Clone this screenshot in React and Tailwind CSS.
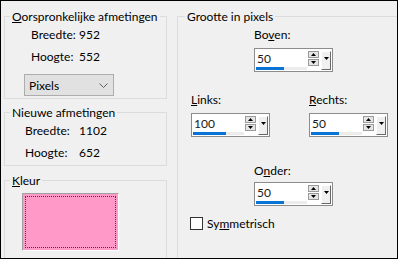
import React from "react";

const font = { fontFamily: 'Lato, "Noto Sans", sans-serif' };

function Spinner({ value, bar }) {
  return (
    <div className="w-[79px] h-[24px] border border-[#8c8c8c] bg-white flex">
      <div className="w-[52px] pl-[2px] flex flex-col">
        <div className="mt-[2px] h-[15px] leading-[15px] text-[12px] text-[#1a1a1a]">{value}</div>
        <div className="mt-[1px] -ml-[1px] h-[3px] flex">
          <div className="h-full bg-[#0a74d6]" style={{ width: bar }} />
          <div className="h-full flex-1 bg-[#ececec]" />
        </div>
      </div>
      <div className="ml-[1px] mt-[2px] w-[11px] flex flex-col gap-[1px]">
        <div className="h-[7px] border border-[#9a9a9a] bg-[#e6e6e6] flex items-center justify-center">
          <svg width="5" height="3" viewBox="0 0 5 3"><polygon points="2.5,0 5,3 0,3" fill="#000" /></svg>
        </div>
        <div className="h-[7px] border border-[#9a9a9a] bg-[#e6e6e6] flex items-center justify-center">
          <svg width="5" height="3" viewBox="0 0 5 3"><polygon points="0,0 5,0 2.5,3" fill="#000" /></svg>
        </div>
      </div>
      <div className="ml-[2px] mt-[2px] w-[10px] h-[19px] bg-[#f0f0f0] border-t border-l border-t-white border-l-white border-r border-b border-r-[#696969] border-b-[#696969] flex justify-center pt-[5px]">
        <svg width="5" height="3" viewBox="0 0 5 3"><polygon points="0,0 5,0 2.5,3" fill="#000" /></svg>
      </div>
    </div>
  );
}

function Field({ label, value, labelW }) {
  return (
    <div className="flex h-[15px] leading-[15px] whitespace-nowrap">
      <span className="shrink-0" style={{ width: labelW }}>{label}</span>
      <span>{value}</span>
    </div>
  );
}

export default function App() {
  return (
    <div
      className="w-[398px] h-[259px] border border-black bg-[#f0f0f0] overflow-hidden flex text-[12px] text-black"
      style={font}
    >
      {/* left column */}
      <div className="ml-[3px] w-[163px] flex flex-col shrink-0">
        <fieldset className="mt-[8px] h-[90px] shrink-0 border border-[#dcdcdc]">
          <legend className="ml-[5px] px-[2px] leading-[15px] whitespace-nowrap">
            <span className="underline">O</span>orspronkelijke afmetingen
          </legend>
          <div className="pl-[26px] mt-[3px]">
            <Field label="Breedte:" value="952" labelW={48} />
          </div>
          <div className="pl-[26px] mt-[7px]">
            <Field label="Hoogte:" value="552" labelW={48} />
          </div>
          <div className="ml-[19px] mt-[10px] w-[90px] h-[22px] border border-[#adadad] bg-[#e1e1e1] flex items-center justify-between pl-[4px] pr-[5px]">
            <span className="leading-[15px]">Pixels</span>
            <svg width="9" height="5" viewBox="0 0 9 5">
              <polyline points="0.5,0.5 4.5,4.5 8.5,0.5" fill="none" stroke="#606060" strokeWidth="1" />
            </svg>
          </div>
        </fieldset>

        <fieldset className="mt-[6px] h-[61px] shrink-0 border border-[#dcdcdc]">
          <legend className="ml-[5px] px-[2px] leading-[15px] whitespace-nowrap">Nieuwe afmetingen</legend>
          <div className="pl-[20px] mt-[3px]">
            <Field label="Breedte:" value="1102" labelW={54} />
          </div>
          <div className="pl-[20px] mt-[7px]">
            <Field label="Hoogte:" value="652" labelW={54} />
          </div>
        </fieldset>

        <fieldset className="mt-[7px] h-[100px] shrink-0 border border-[#dcdcdc]">
          <legend className="ml-[5px] px-[2px] leading-[15px] whitespace-nowrap">
            <span className="underline">K</span>leur
          </legend>
          <div className="ml-[17px] mt-[5px] w-[97px] h-[58px] border-t border-l border-t-[#a0a0a0] border-l-[#a0a0a0] border-r border-b border-r-white border-b-white bg-[#ff99c8] p-[2px]">
            <div className="w-full h-full border border-dotted border-[#0b5a34]" />
          </div>
        </fieldset>
      </div>

      {/* right column */}
      <fieldset className="ml-[10px] mt-[8px] w-[240px] h-[270px] shrink-0 border border-[#dcdcdc]">
        <legend className="ml-[7px] px-[2px] leading-[15px] whitespace-nowrap">Grootte in pixels</legend>

        <div className="ml-[76px] mt-[3px] flex flex-col">
          <div className="h-[15px] leading-[15px]">
            Bo<span className="underline">v</span>en:
          </div>
          <div className="mt-[6px]">
            <Spinner value="50" bar={28} />
          </div>
        </div>

        <div className="ml-[13px] mt-[20px] flex gap-[39px]">
          <div className="flex flex-col">
            <div className="h-[15px] leading-[15px]">
              <span className="underline">L</span>inks:
            </div>
            <div className="mt-[6px]">
              <Spinner value="100" bar={33} />
            </div>
          </div>
          <div className="flex flex-col">
            <div className="h-[15px] leading-[15px]">
              <span className="underline">R</span>echts:
            </div>
            <div className="mt-[6px]">
              <Spinner value="50" bar={28} />
            </div>
          </div>
        </div>

        <div className="ml-[76px] mt-[26px] flex flex-col">
          <div className="h-[15px] leading-[15px]">
            O<span className="underline">n</span>der:
          </div>
          <div className="mt-[4px]">
            <Spinner value="50" bar={28} />
          </div>
        </div>

        <div className="ml-[12px] mt-[10px] flex items-center gap-[4px]">
          <div className="w-[13px] h-[13px] border border-[#333] bg-white" />
          <span className="leading-[15px]">
            Sy<span className="underline">m</span>metrisch
          </span>
        </div>
      </fieldset>
    </div>
  );
}
